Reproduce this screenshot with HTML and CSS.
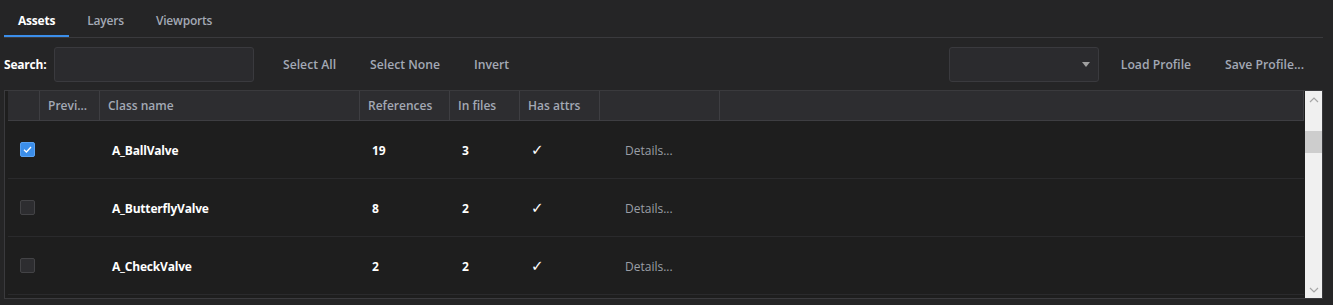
FILE: index.html
```html
<!DOCTYPE html>
<html lang="en">
<head>
  <meta charset="UTF-8" />
  <title>Assets</title>
  <link rel="stylesheet" href="styles.css">
</head>
<body>

  <div class="tabs">
    <div class="tab active">Assets</div>
    <div class="tab">Layers</div>
    <div class="tab">Viewports</div>
  </div>

  <div class="toolbar">
    <label class="search-label" for="search">Search:</label>
    <input type="text" id="search" class="search-input">
    <button class="btn">Select All</button>
    <button class="btn">Select None</button>
    <button class="btn">Invert</button>
    <div class="spacer"></div>
    <div class="dropdown"><span class="arrow"></span></div>
    <button class="btn">Load Profile</button>
    <button class="btn">Save Profile...</button>
  </div>

  <div class="frame">
    <div class="grid">
      <div class="row head">
        <div class="cell"></div>
        <div class="cell">Previ...</div>
        <div class="cell">Class name</div>
        <div class="cell">References</div>
        <div class="cell">In files</div>
        <div class="cell">Has attrs</div>
        <div class="cell"></div>
        <div class="cell last"></div>
      </div>

      <div class="row">
        <div class="cell"><span class="check on">
          <svg width="11" height="11" viewBox="0 0 11 11"><path d="M2 5.8 L4.4 8 L9 3" fill="none" stroke="#fff" stroke-width="1.3"/></svg>
        </span></div>
        <div class="cell"></div>
        <div class="cell name">A_BallValve</div>
        <div class="cell num">19</div>
        <div class="cell num">3</div>
        <div class="cell tick">✓</div>
        <div class="cell link">Details...</div>
        <div class="cell last"></div>
      </div>

      <div class="row">
        <div class="cell"><span class="check"></span></div>
        <div class="cell"></div>
        <div class="cell name">A_ButterflyValve</div>
        <div class="cell num">8</div>
        <div class="cell num">2</div>
        <div class="cell tick">✓</div>
        <div class="cell link">Details...</div>
        <div class="cell last"></div>
      </div>

      <div class="row">
        <div class="cell"><span class="check"></span></div>
        <div class="cell"></div>
        <div class="cell name">A_CheckValve</div>
        <div class="cell num">2</div>
        <div class="cell num">2</div>
        <div class="cell tick">✓</div>
        <div class="cell link">Details...</div>
        <div class="cell last"></div>
      </div>

      <div class="row">
        <div class="cell"></div>
      </div>
    </div>

    <div class="scrollbar">
      <div class="scroll-btn">
        <svg width="10" height="6" viewBox="0 0 10 6"><path d="M1 5 L5 1 L9 5" fill="none" stroke="#a6a6a6" stroke-width="1.2"/></svg>
      </div>
      <div class="track"><div class="thumb"></div></div>
      <div class="scroll-btn">
        <svg width="10" height="6" viewBox="0 0 10 6"><path d="M1 1 L5 5 L9 1" fill="none" stroke="#a6a6a6" stroke-width="1.2"/></svg>
      </div>
    </div>
  </div>

</body>
</html>
```

FILE: styles.css
```css
body {
  font-family: 'Open Sans', 'Noto Sans', sans-serif;
  font-size: 12px;
  background-color: #252526;
  color: #fff;
  margin: 0;
  padding: 0;
  height: 305px;
  overflow: hidden;
}
.tabs {
  display: flex;
  gap: 4px;
  height: 37px;
  margin: 0 10px 0 4px;
  border-bottom: 1px solid #3a3a3d;
}
.tab {
  padding: 0 14px;
  line-height: 42px;
  height: 36px;
  font-weight: 600;
  color: #a3a9b5;
  letter-spacing: -0.2px;
}
.tab.active {
  color: #fff;
  font-weight: 700;
  border-bottom: 2px solid #3b8eea;
  height: 35px;
}
.toolbar {
  display: flex;
  align-items: center;
  height: 52px;
  padding: 0 12px 0 4px;
}
.search-label {
  font-weight: 700;
  color: #fff;
  width: 50px;
  letter-spacing: -0.2px;
}
.search-input {
  width: 200px;
  height: 35px;
  box-sizing: border-box;
  background: #2b2b2e;
  border: 1px solid #3a3a3e;
  border-radius: 3px;
  margin: 0 12px 0 0;
  outline: none;
}
.btn {
  background: none;
  border: none;
  font-family: inherit;
  font-size: 12.2px;
  font-weight: 600;
  color: #a3a9b5;
  padding: 0 17px;
  height: 30px;
}
.spacer {
  flex: 1;
}
.dropdown {
  width: 150px;
  height: 35px;
  box-sizing: border-box;
  background: #2b2b2e;
  border: 1px solid #3a3a3e;
  border-radius: 3px;
  margin-right: 5px;
  display: flex;
  align-items: center;
  justify-content: flex-end;
  padding-right: 8px;
}
.arrow {
  width: 0;
  height: 0;
  border-left: 4px solid transparent;
  border-right: 4px solid transparent;
  border-top: 5px solid #a0a0a0;
}
.frame {
  display: flex;
  margin-left: 4px;
  width: 1319px;
  height: 209px;
  box-sizing: border-box;
  border: 1px solid #3a3a3d;
  background: #1e1e1e;
  padding-left: 3px;
}
.grid {
  width: 1296px;
  margin-right: 1px;
  overflow: hidden;
}
.row {
  display: grid;
  grid-template-columns: 32px 60px 260px 90px 70px 80px 120px 1fr;
  height: 57px;
  border-bottom: 1px solid #2a2a2c;
  align-items: center;
}
.row.head {
  height: 29px;
  background: #2d2d30;
  border-bottom: 1px solid #3e3e42;
  border-right: 1px solid #3e3e42;
  align-items: stretch;
}
.head .cell {
  border-right: 1px solid #3e3e42;
  padding-left: 8px;
  line-height: 30px;
  font-weight: 600;
  color: #a3a9b5;
}
.head .cell.last {
  border-right: none;
}
.cell {
  white-space: nowrap;
  overflow: hidden;
}
.name,
.num {
  font-weight: 700;
  padding-left: 12px;
  letter-spacing: -0.2px;
  padding-top: 1px;
}
.tick {
  font-family: 'DejaVu Sans', sans-serif;
  font-weight: 700;
  font-size: 15px;
  padding-left: 11px;
}
.link {
  padding-left: 25px;
  padding-top: 1px;
  color: #9a9ea6;
}
.check {
  display: flex;
  align-items: center;
  justify-content: center;
  width: 15px;
  height: 15px;
  box-sizing: border-box;
  margin-left: 12px;
  border-radius: 2px;
  background: #2d2d30;
  border: 1px solid #434346;
}
.check.on {
  background: #3b8eea;
  border-color: #5aa2f2;
}
.scrollbar {
  width: 17px;
  background: #f0f0f0;
  display: flex;
  flex-direction: column;
}
.scroll-btn {
  height: 17px;
  display: flex;
  align-items: center;
  justify-content: center;
}
.track {
  flex: 1;
  padding-top: 23px;
}
.thumb {
  height: 22px;
  background: #cdcdcd;
}
```
